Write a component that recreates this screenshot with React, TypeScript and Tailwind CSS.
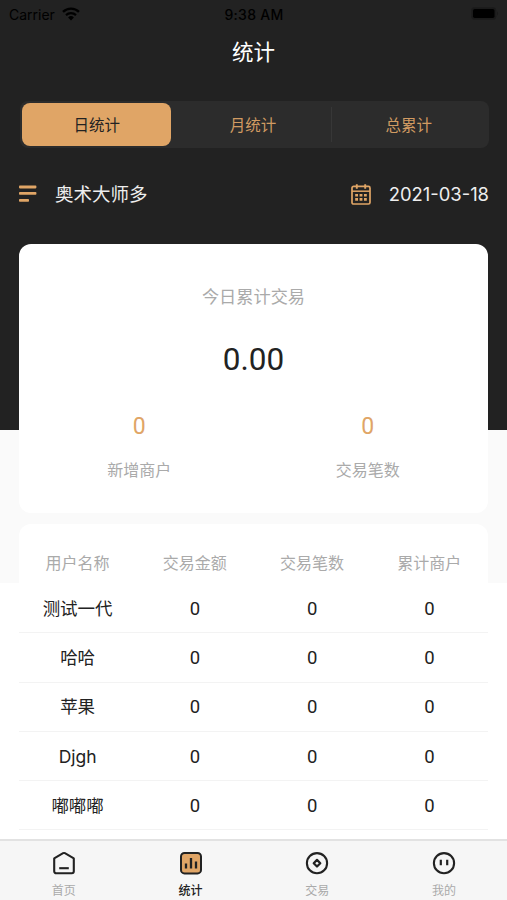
import type { ReactNode } from "react";
import { clsx } from "clsx";

const PERIODS = ["日统计", "月统计", "总累计"];

const COLUMNS = ["用户名称", "交易金额", "交易笔数", "累计商户"];

const ROWS = [
  { name: "测试一代", values: [0, 0, 0] },
  { name: "哈哈", values: [0, 0, 0] },
  { name: "苹果", values: [0, 0, 0] },
  { name: "Djgh", values: [0, 0, 0] },
  { name: "嘟嘟嘟", values: [0, 0, 0] },
];

const TABS: { label: string; icon: ReactNode }[] = [
  { label: "首页", icon: <HomeIcon /> },
  { label: "统计", icon: <StatsIcon /> },
  { label: "交易", icon: <TradeIcon /> },
  { label: "我的", icon: <ProfileIcon /> },
];

function WifiIcon() {
  return (
    <svg width="18" height="14" viewBox="0 0 18 14" fill="none" stroke="#000">
      <path d="M1 4.9a11.4 11.4 0 0 1 16 0" strokeWidth="2.4" />
      <path d="M4 8.1a7.2 7.2 0 0 1 10 0" strokeWidth="2.2" />
      <path d="M9 13.4 6.1 10.4a4.2 4.2 0 0 1 5.8 0Z" fill="#000" stroke="none" />
    </svg>
  );
}

function BatteryIcon() {
  return (
    <svg width="28" height="13" viewBox="0 0 28 13">
      <rect x=".5" y=".5" width="24.5" height="12" rx="3.2" fill="#1a1a1a" stroke="#1c1c1c" />
      <rect x="2" y="2" width="21.5" height="9" rx="1.8" fill="#000" />
      <path d="M26.2 4.5c1.2.5 1.2 3.5 0 4Z" fill="#191919" />
    </svg>
  );
}

function ListIcon() {
  return (
    <svg width="18" height="18" viewBox="0 0 18 18" fill="#e0a566">
      <rect x="0" y="0.6" width="17.4" height="2.8" rx=".8" />
      <rect x="0" y="7" width="17.4" height="2.8" rx=".8" />
      <rect x="0" y="14" width="10" height="2.8" rx=".8" />
    </svg>
  );
}

function CalendarIcon() {
  return (
    <svg width="20" height="21" viewBox="0 0 20 21" fill="none" stroke="#e0a566">
      <rect x="1" y="2.4" width="18" height="17.6" rx="1.6" strokeWidth="1.7" />
      <path d="M1 7.2h18" strokeWidth="1.5" />
      <path d="M5.8 .2v4.6M14.2 .2v4.6" strokeWidth="1.9" />
      <path
        d="M4.2 11.2h2.8M8.6 11.2h2.8M13 11.2h2.8M4.2 15.4h2.8M8.6 15.4h2.8M13 15.4h2.8"
        strokeWidth="2.6"
      />
    </svg>
  );
}

function HomeIcon() {
  return (
    <svg width="24" height="24" viewBox="0 0 24 24" fill="none" stroke="#222" strokeWidth="2.1">
      <path
        d="M2.2 7.4 11.1 2.2q.9-.5 1.8 0L21.8 7.4V20.3a2 2 0 0 1-2 2H4.2a2 2 0 0 1-2-2Z"
        strokeLinejoin="round"
      />
      <path d="M7.2 17.2h9.6" />
    </svg>
  );
}

function StatsIcon() {
  return (
    <svg width="24" height="24" viewBox="0 0 24 24" fill="none" stroke="#222" strokeWidth="2">
      <rect x="2" y="2" width="20" height="20.4" rx="3.5" fill="#e0a566" />
      <path d="M7 12.5v5M12 7v10.5M17 10.5v7" strokeWidth="2.3" />
    </svg>
  );
}

function TradeIcon() {
  return (
    <svg width="24" height="24" viewBox="0 0 24 24" fill="none" stroke="#222">
      <circle cx="12" cy="12.2" r="10.1" strokeWidth="2.1" />
      <path d="m12 8.9 3.3 3.3-3.3 3.3-3.3-3.3Z" strokeWidth="2.2" strokeLinejoin="round" />
    </svg>
  );
}

function ProfileIcon() {
  return (
    <svg width="24" height="24" viewBox="0 0 24 24" fill="none" stroke="#222" strokeWidth="2.1">
      <circle cx="12" cy="12.2" r="10.1" />
      <path d="M8.8 8.7v5.6M15.2 8.7v5.6" strokeWidth="2.2" />
    </svg>
  );
}

function StatusBar() {
  return (
    <div className="grid h-7 shrink-0 grid-cols-3 items-center pr-2 pl-[9px] text-[14px] text-black">
      <div className="flex items-center gap-[7px]">
        <span>Carrier</span>
        <WifiIcon />
      </div>
      <span className="text-center font-medium tracking-[0.3px]">9:38 AM</span>
      <div className="flex justify-end pb-0.5">
        <BatteryIcon />
      </div>
    </div>
  );
}

function PeriodSwitch() {
  return (
    <div className="mt-[25px] mr-[18px] ml-5 grid h-[47px] grid-cols-3 rounded-lg bg-[#2c2c2c] pr-[3px] text-[15.5px]">
      {PERIODS.map((period, index) => (
        <button
          key={period}
          type="button"
          className={clsx(
            "flex items-center justify-center pt-0.5",
            index === 0
              ? "my-0.5 mr-1 ml-0.5 rounded-lg bg-[#e0a566] text-[#222]"
              : "text-[#d19b62]",
            index === 2 && "my-1.5 border-l border-[#373737]",
          )}
        >
          {period}
        </button>
      ))}
    </div>
  );
}

function SummaryItem({ value, label }: { value: number; label: string }) {
  return (
    <div className="flex flex-col items-center">
      <span className="pt-px font-['Roboto',sans-serif] text-[23px] leading-7 text-[#e0a566]">
        {value}
      </span>
      <span className="mt-[17px] text-base leading-6 text-[#aaa]">{label}</span>
    </div>
  );
}

export default function App() {
  return (
    <div className="flex h-[900px] w-[507px] flex-col overflow-hidden bg-[linear-gradient(#222_430px,#fafafa_430px,#fafafa_583px,#fff_583px)] font-['Inter','Noto_Sans_CJK_SC',sans-serif]">
      <StatusBar />
      <h1 className="mt-1 h-11 text-center text-[21.5px] leading-10 text-white">统计</h1>
      <PeriodSwitch />

      <div className="mt-[30px] mr-[18px] ml-[19px] flex h-8 items-center text-[#eee]">
        <ListIcon />
        <span className="ml-[18px] pt-px text-[18.5px]">奥术大师多</span>
        <span className="mr-[18px] ml-auto">
          <CalendarIcon />
        </span>
        <span className="pt-px text-[18.4px]">2021-03-18</span>
      </div>

      <section className="mx-[19px] mt-[34px] h-[269px] shrink-0 rounded-xl bg-white">
        <div className="flex flex-col items-center pt-[39px]">
          <span className="text-[17.2px] leading-7 text-[#aaa]">今日累计交易</span>
          <span className="mt-[29px] font-['Roboto',sans-serif] text-[31.5px] leading-10 text-[#222]">
            0.00
          </span>
        </div>
        <div className="mt-8 grid grid-cols-2 px-1.5">
          <SummaryItem value={0} label="新增商户" />
          <SummaryItem value={0} label="交易笔数" />
        </div>
      </section>

      <section className="mx-[19px] mt-[11px] flex min-h-0 flex-1 flex-col overflow-hidden rounded-t-xl bg-white">
        <div className="grid h-[60px] shrink-0 grid-cols-4 pt-[27px] text-center text-base leading-6 text-[#aaa]">
          {COLUMNS.map((column) => (
            <span key={column}>{column}</span>
          ))}
        </div>
        {ROWS.map((row) => (
          <div
            key={row.name}
            className="grid h-[49.3px] shrink-0 grid-cols-4 items-center border-b border-[#f3f3f3] pt-px text-center text-[17.5px] leading-6 text-[#222]"
          >
            <span>{row.name}</span>
            {row.values.map((value, index) => (
              <span key={index} className="font-['Roboto',sans-serif] text-[18.5px]">
                {value}
              </span>
            ))}
          </div>
        ))}
      </section>

      <nav className="grid h-[61px] shrink-0 grid-cols-4 border-t-2 border-[#e2e2e2] bg-[#f6f6f6]">
        {TABS.map((tab) => (
          <a
            key={tab.label}
            href="#"
            className={clsx(
              "flex flex-col items-center gap-1.5 pt-[10px] pl-px text-xs leading-5",
              tab.label === "统计" ? "font-medium text-[#222]" : "text-[#aaa]",
            )}
          >
            {tab.icon}
            <span>{tab.label}</span>
          </a>
        ))}
      </nav>
    </div>
  );
}
